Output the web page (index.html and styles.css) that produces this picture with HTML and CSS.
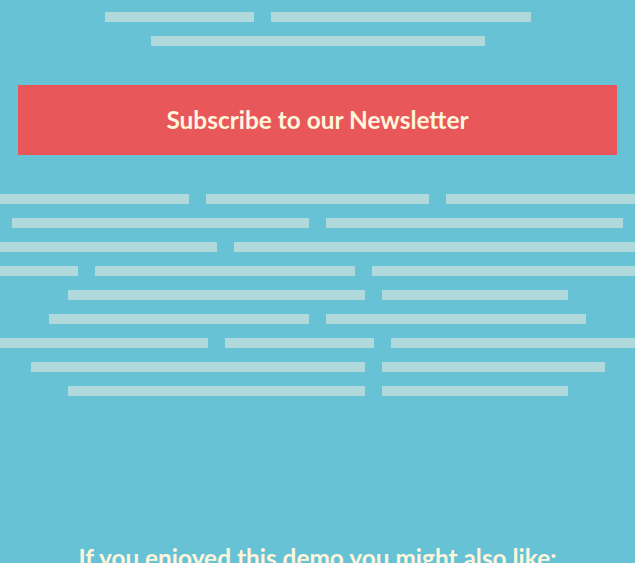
FILE: index.html
```html
<!DOCTYPE html>
<html>
<head>
<meta charset="utf-8">
<link rel="stylesheet" href="styles.css">
</head>
<body>
<div class="lines top">
  <div class="row"><span class="bar" style="width:149px"></span><span class="bar" style="width:260px"></span></div>
  <div class="row"><span class="bar" style="width:334px"></span></div>
</div>
<a class="subscribe">Subscribe to our Newsletter</a>
<div class="lines body">
  <div class="row"><span class="bar" style="width:200px"></span><span class="bar" style="width:223px"></span><span class="bar" style="width:200px"></span></div>
  <div class="row"><span class="bar" style="width:297px"></span><span class="bar" style="width:297px"></span></div>
  <div class="row"><span class="bar" style="width:230px"></span><span class="bar" style="width:414px"></span></div>
  <div class="row"><span class="bar" style="width:90px"></span><span class="bar" style="width:260px"></span><span class="bar" style="width:275px"></span></div>
  <div class="row"><span class="bar" style="width:297px"></span><span class="bar" style="width:186px"></span></div>
  <div class="row"><span class="bar" style="width:260px"></span><span class="bar" style="width:260px"></span></div>
  <div class="row"><span class="bar" style="width:215px"></span><span class="bar" style="width:149px"></span><span class="bar" style="width:251px"></span></div>
  <div class="row"><span class="bar" style="width:334px"></span><span class="bar" style="width:223px"></span></div>
  <div class="row"><span class="bar" style="width:297px"></span><span class="bar" style="width:186px"></span></div>
</div>
<h2 class="more">If you enjoyed this demo you might also like:</h2>
</body>
</html>
```
FILE: styles.css
```css
html, body {
  margin: 0;
  padding: 0;
}
body {
  background: #66c2d4;
  font-family: Lato, "Liberation Sans", sans-serif;
  overflow: hidden;
  width: 635px;
  height: 563px;
}
.lines {
  display: flex;
  flex-direction: column;
  gap: 14px;
}
.top {
  padding-top: 12px;
}
.row {
  display: flex;
  justify-content: center;
  gap: 17px;
  height: 10px;
}
.bar {
  flex: none;
  height: 10px;
  background: #afd9da;
}
.subscribe {
  display: flex;
  align-items: center;
  justify-content: center;
  margin: 39px 18px 0;
  height: 70px;
  padding-bottom: 2px;
  box-sizing: border-box;
  background: #e8585a;
  color: #fef6dc;
  font-weight: 700;
  font-size: 24.4px;
}
.body {
  margin-top: 39px;
}
.more {
  margin: 147px 0 0;
  text-align: center;
  color: #fef6dc;
  font-weight: 700;
  font-size: 24.4px;
  line-height: 30px;
}
```
